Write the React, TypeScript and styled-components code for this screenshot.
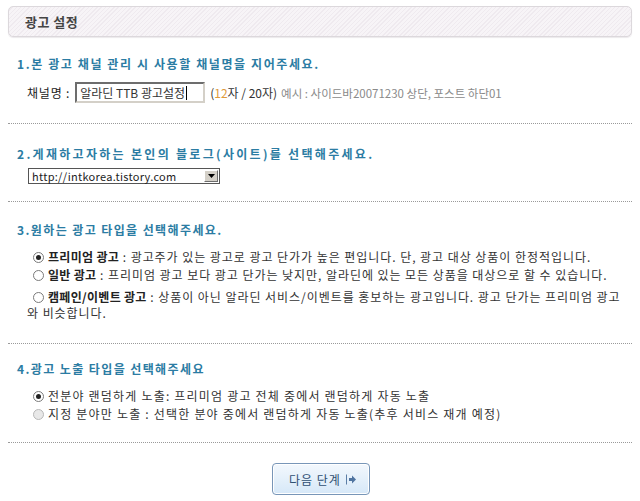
import React from "react";
import styled, { createGlobalStyle } from "styled-components";

const GlobalStyle = createGlobalStyle`
  body {
    margin: 0;
    background: #fff;
    font-family: "Noto Sans CJK KR", "Noto Sans", sans-serif;
    font-size: 12px;
    color: #333;
  }
`;

const Page = styled.div`
  width: 640px;
  padding: 6px 8px 0;
  box-sizing: border-box;
`;

const HeaderBar = styled.div`
  height: 29px;
  display: flex;
  align-items: center;
  padding-left: 16px;
  border: 1px solid #dcd8dc;
  border-radius: 5px;
  box-shadow: 0 1px 1px #ece9ec;
  background: repeating-linear-gradient(
    135deg,
    #f7f4f7 0,
    #f7f4f7 2px,
    #efeaef 2px,
    #efeaef 3px
  );
`;

const HeaderTitle = styled.h1`
  margin: 0;
  font-size: 13px;
  font-weight: 700;
  color: #444;
  letter-spacing: 0.5px;
`;

const Section = styled.section<{ $top: number; $bottom: number }>`
  padding: ${(p) => p.$top}px 0 ${(p) => p.$bottom}px 9px;
  border-bottom: 1px dotted #9a9a9a;
`;

const SectionTitle = styled.h2<{ $gap: number; $spacing?: number }>`
  margin: 0 0 ${(p) => p.$gap}px;
  font-size: 12px;
  line-height: 14px;
  font-weight: 700;
  color: #2b7ca3;
  letter-spacing: ${(p) => p.$spacing ?? 1.6}px;
`;

const FieldRow = styled.div`
  display: flex;
  align-items: center;
  padding-left: 10px;
  gap: 3px;
`;

const Label = styled.span`
  color: #222;
  margin-right: 2px;
  letter-spacing: 0.8px;
`;

const TextInput = styled.div`
  width: 130px;
  height: 21px;
  box-sizing: border-box;
  border: 2px solid;
  border-color: #6d6d6d #d4d0c8 #d4d0c8 #6d6d6d;
  padding: 1px 3px;
  line-height: 15px;
  color: #333;
  white-space: nowrap;
`;

const Caret = styled.span`
  display: inline-block;
  width: 1px;
  height: 14px;
  background: #000;
  vertical-align: -2px;
  margin-left: 1px;
`;

const Counter = styled.span`
  margin-left: 2px;
  color: #333;
`;

const Accent = styled.span`
  color: #de9a3c;
`;

const Hint = styled.span`
  color: #8a8a8a;
  margin-left: 1px;
  font-size: 11.5px;
`;

const SelectBox = styled.div`
  margin-left: 11px;
  width: 192px;
  height: 16px;
  box-sizing: border-box;
  border: 1px solid #555;
  display: flex;
  align-items: center;
  justify-content: space-between;
  padding-left: 3px;
  font-size: 11px;
  letter-spacing: 0.3px;
  color: #222;
`;

const SelectArrow = styled.span`
  width: 14px;
  height: 12px;
  margin-right: 1px;
  box-sizing: border-box;
  border: 1px solid;
  border-color: #fff #6d6d6d #6d6d6d #fff;
  background: #d4d0c8;
  display: flex;
  align-items: center;
  justify-content: center;
`;

const OptionList = styled.div<{ $spacing?: number }>`
  display: flex;
  flex-direction: column;
  padding-left: 10px;
  padding-right: 2px;
  letter-spacing: ${(p) => p.$spacing ?? 0.95}px;
`;

const OptionLine = styled.div<{ $space?: number }>`
  margin-top: ${(p) => p.$space ?? 0}px;
  line-height: 16px;
  color: #333;
`;

const Radio = styled.span<{ $checked?: boolean; $faded?: boolean }>`
  display: inline-block;
  position: relative;
  width: 11px;
  height: 11px;
  margin: 0 4px 0 6px;
  border-radius: 50%;
  box-sizing: border-box;
  border: 1px solid ${(p) => (p.$faded ? "#b8b8b8" : "#7a7a7a")};
  background: ${(p) => (p.$faded ? "#e8e8e8" : "#fff")};
  vertical-align: -1px;

  &::after {
    content: "";
    display: ${(p) => (p.$checked ? "block" : "none")};
    position: absolute;
    left: 2px;
    top: 2px;
    width: 5px;
    height: 5px;
    border-radius: 50%;
    background: #222;
  }
`;

const Strong = styled.b`
  color: #222;
  letter-spacing: 0.3px;
`;

const Footer = styled.div`
  display: flex;
  justify-content: center;
  padding: 20px 0 0 2px;
`;

const NextButton = styled.button`
  width: 98px;
  height: 32px;
  border: 1px solid #7896b8;
  border-radius: 4px;
  background: linear-gradient(#f3f8fd, #d6e8f8);
  box-shadow: inset 0 0 0 1px #fff;
  display: flex;
  align-items: center;
  justify-content: center;
  gap: 5px;
  font-family: inherit;
  font-size: 12px;
  color: #2f4f72;
  letter-spacing: 1px;
  cursor: pointer;
  padding: 0 0 0 4px;
`;

const NextIcon = () => (
  <svg width="11" height="11" viewBox="0 0 11 11">
    <rect x="0" y="0.5" width="1" height="10" fill="#5c7ea6" />
    <path d="M3 4h3V1.5L10 5.5 6 9.5V7H3z" fill="#4f74a0" />
  </svg>
);

const DownArrow = () => (
  <svg width="7" height="4" viewBox="0 0 7 4">
    <path d="M0 0h7L3.5 4z" fill="#000" />
  </svg>
);

export default function App() {
  return (
    <Page>
      <GlobalStyle />
      <HeaderBar>
        <HeaderTitle>광고 설정</HeaderTitle>
      </HeaderBar>

      <Section $top={20} $bottom={20}>
        <SectionTitle $gap={11}>
          1.본 광고 채널 관리 시 사용할 채널명을 지어주세요.
        </SectionTitle>
        <FieldRow>
          <Label>채널명 :</Label>
          <TextInput>
            알라딘 TTB 광고설정
            <Caret />
          </TextInput>
          <Counter>
            (<Accent>12</Accent>자 / 20자)
          </Counter>
          <Hint>예시 : 사이드바20071230 상단, 포스트 하단01</Hint>
        </FieldRow>
      </Section>

      <Section $top={23} $bottom={17}>
        <SectionTitle $gap={7} $spacing={2.3}>
          2.게재하고자하는 본인의 블로그(사이트)를 선택해주세요.
        </SectionTitle>
        <SelectBox>
          <span>http://intkorea.tistory.com</span>
          <SelectArrow>
            <DownArrow />
          </SelectArrow>
        </SelectBox>
      </Section>

      <Section $top={21} $bottom={22}>
        <SectionTitle $gap={12} $spacing={1.4}>
          3.원하는 광고 타입을 선택해주세요.
        </SectionTitle>
        <OptionList>
          <OptionLine>
            <Radio $checked />
            <Strong>프리미엄 광고</Strong> : 광고주가 있는 광고로 광고 단가가 높은
            편입니다. 단, 광고 대상 상품이 한정적입니다.
          </OptionLine>
          <OptionLine $space={2}>
            <Radio />
            <Strong>일반 광고</Strong> : 프리미엄 광고 보다 광고 단가는 낮지만,
            알라딘에 있는 모든 상품을 대상으로 할 수 있습니다.
          </OptionLine>
          <OptionLine $space={6}>
            <Radio />
            <Strong>캠페인/이벤트 광고</Strong> : 상품이 아닌 알라딘
            서비스/이벤트를 홍보하는 광고입니다. 광고 단가는 프리미엄 광고 와
            비슷합니다.
          </OptionLine>
        </OptionList>
      </Section>

      <Section $top={18} $bottom={20}>
        <SectionTitle $gap={12} $spacing={1.4}>
          4.광고 노출 타입을 선택해주세요
        </SectionTitle>
        <OptionList $spacing={1.2}>
          <OptionLine>
            <Radio $checked />
            전분야 랜덤하게 노출: 프리미엄 광고 전체 중에서 랜덤하게 자동 노출
          </OptionLine>
          <OptionLine $space={2}>
            <Radio $faded />
            지정 분야만 노출 : 선택한 분야 중에서 랜덤하게 자동 노출(추후 서비스
            재개 예정)
          </OptionLine>
        </OptionList>
      </Section>

      <Footer>
        <NextButton type="button">
          다음 단계
          <NextIcon />
        </NextButton>
      </Footer>
    </Page>
  );
}
